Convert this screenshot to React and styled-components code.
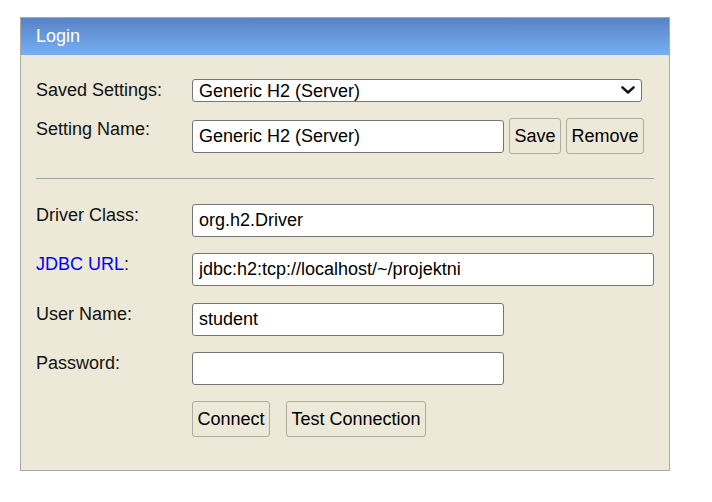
import React from "react";
import styled, { createGlobalStyle } from "styled-components";

const panelBg = "#ece9d8";
const fieldBorder = "#767676";
const buttonBorder = "#aeab9f";

const GlobalStyle = createGlobalStyle`
  html, body {
    margin: 0;
    padding: 0;
    background: #fff;
  }

  body {
    font-family: "Liberation Sans", Arial, sans-serif;
    font-size: 18px;
    color: #000;
  }

  * {
    box-sizing: border-box;
  }
`;

const App = () => {
  return (
    <>
      <GlobalStyle />
      <Page>
        <Panel>
          <Header>Login</Header>
          <Body>
            <FormGrid>
              <Label>Saved Settings:</Label>
              <SelectWrap>
                <Select defaultValue="h2server">
                  <option value="h2server">Generic H2 (Server)</option>
                  <option value="h2embedded">Generic H2 (Embedded)</option>
                </Select>
                <Chevron viewBox="0 0 14 8" aria-hidden="true">
                  <path d="M1.4 1.3 L7 6.5 L12.6 1.3" />
                </Chevron>
              </SelectWrap>

              <Label>Setting Name:</Label>
              <FieldGroup gap={5}>
                <Input width={312} defaultValue="Generic H2 (Server)" />
                <Button>Save</Button>
                <Button>Remove</Button>
              </FieldGroup>
            </FormGrid>

            <Divider />

            <FormGrid wide>
              <Label>Driver Class:</Label>
              <Input defaultValue="org.h2.Driver" />

              <Label>
                <LabelLink href="#">JDBC URL</LabelLink>:
              </Label>
              <Input defaultValue="jdbc:h2:tcp://localhost/~/projektni" />

              <Label>User Name:</Label>
              <Input width={312} defaultValue="student" />

              <Label>Password:</Label>
              <Input width={312} type="password" />

              <span />
              <FieldGroup gap={16}>
                <Button>Connect</Button>
                <Button>Test Connection</Button>
              </FieldGroup>
            </FormGrid>
          </Body>
        </Panel>
      </Page>
    </>
  );
};

export default App;

const Page = styled.div`
  padding: 17px 0 0 20px;
`;

const Panel = styled.div`
  width: 650px;
  border: 1px solid #a8a8a4;
  background-color: ${panelBg};
`;

const Header = styled.div`
  height: 37px;
  display: flex;
  align-items: center;
  padding-left: 15px;
  color: #fff;
  font-size: 18px;
  background: linear-gradient(to bottom, #5982c5 0%, #76b0f4 100%);
`;

const Body = styled.div`
  padding: 24px 15px 33px 15px;
`;

const FormGrid = styled.div`
  display: grid;
  grid-template-columns: 156px 1fr;
  row-gap: ${({ wide }) => (wide ? "16.33px" : "16px")};
  align-items: center;
`;

const Label = styled.div`
  align-self: start;
  padding-top: 1px;
  font-size: 18px;
  line-height: 21px;
  color: #111;
`;

const LabelLink = styled.a`
  color: #0000ff;
  text-decoration: none;
`;

const SelectWrap = styled.div`
  position: relative;
  width: 450px;
  height: 23px;
`;

const Select = styled.select`
  appearance: none;
  width: 100%;
  height: 100%;
  margin: 0;
  padding: 0 30px 0 6px;
  border: 1px solid ${fieldBorder};
  border-radius: 3px;
  background: #fff;
  font-family: "Liberation Sans", Arial, sans-serif;
  font-size: 18px;
  color: #000;
  outline: none;
`;

const Chevron = styled.svg`
  position: absolute;
  right: 7px;
  top: 7px;
  width: 14px;
  height: 8px;
  pointer-events: none;

  path {
    fill: none;
    stroke: #111;
    stroke-width: 2.4;
    stroke-linecap: round;
    stroke-linejoin: round;
  }
`;

const FieldGroup = styled.div`
  display: flex;
  align-items: center;
  gap: ${({ gap }) => gap}px;
`;

const Input = styled.input`
  width: ${({ width }) => (width ? `${width}px` : "100%")};
  height: 33px;
  margin: 0;
  padding: 0 6px;
  border: 1px solid ${fieldBorder};
  border-radius: 3px;
  background: #fff;
  font-family: "Liberation Sans", Arial, sans-serif;
  font-size: 18px;
  color: #000;
  outline: none;
`;

const Button = styled.button`
  height: 36px;
  margin: 0;
  padding: 0 4.5px;
  border: 1px solid ${buttonBorder};
  border-radius: 3px;
  background-color: ${panelBg};
  font-family: "Liberation Sans", Arial, sans-serif;
  font-size: 18px;
  color: #000;
  cursor: pointer;

  :hover {
    background-color: #e3e0cf;
  }
`;

const Divider = styled.hr`
  margin: 24px 0 25px 0;
  height: 1px;
  border: none;
  background-color: #a4a4a0;
`;
